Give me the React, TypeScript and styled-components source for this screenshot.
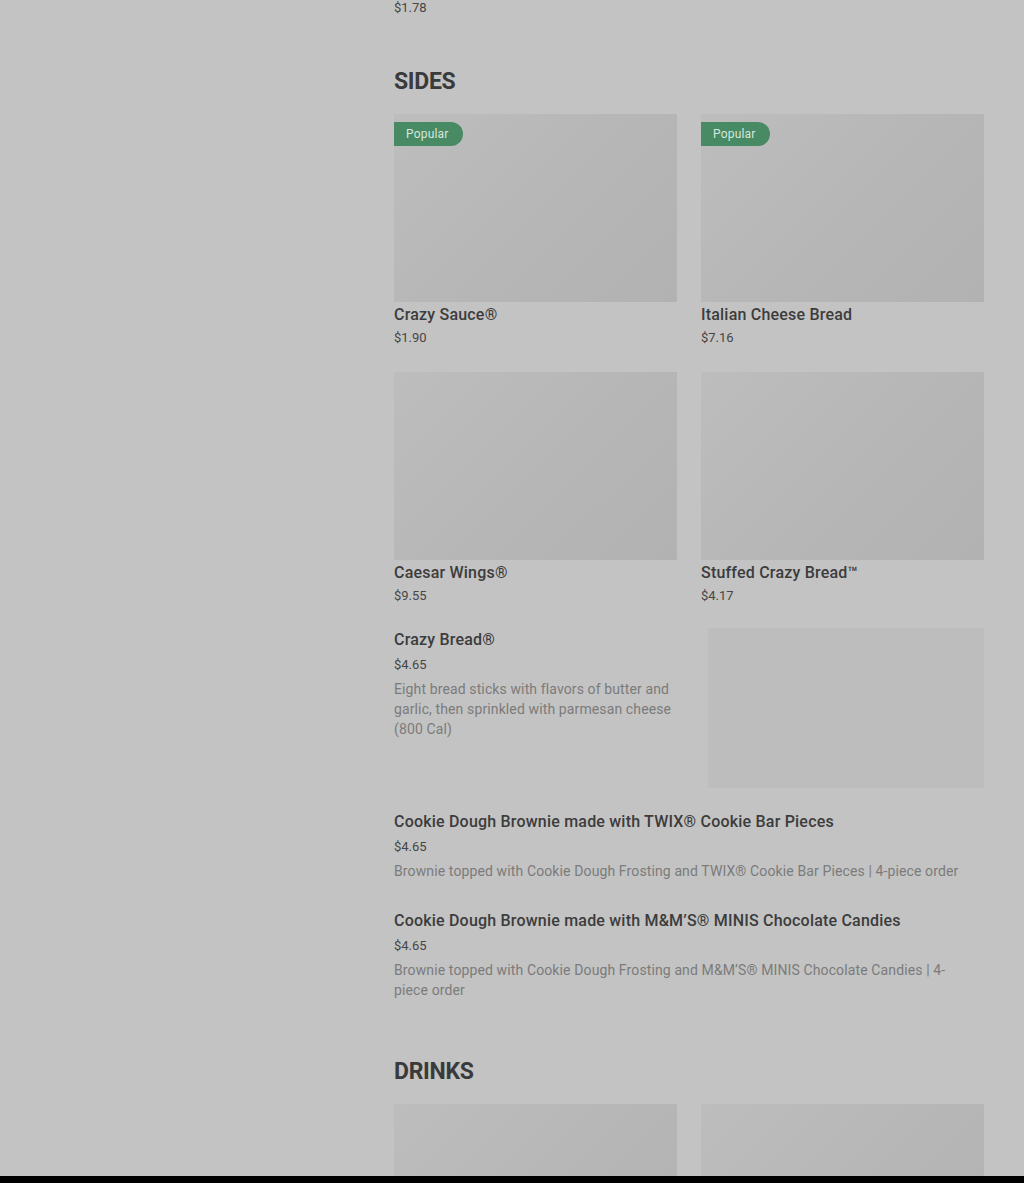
import styled, { createGlobalStyle } from 'styled-components';

const GlobalStyle = createGlobalStyle`
  html, body {
    margin: 0;
    padding: 0;
    background: #000000;
  }
  body {
    font-family: Roboto, "Liberation Sans", sans-serif;
    color: #3a3a3a;
  }
  * {
    box-sizing: border-box;
  }
`;

const Page = styled.div`
  height: 1176px;
  overflow: hidden;
  background: #c3c3c3;
  display: flex;
`;

const Sidebar = styled.aside`
  width: 394px;
  flex-shrink: 0;
`;

const Main = styled.main`
  width: 590px;
  display: flex;
  flex-direction: column;
`;

const TailPrice = styled.div`
  font-size: 13px;
  line-height: 16px;
  color: #464646;
`;

const Section = styled.section`
  margin-top: 49px;
`;

const SectionTitle = styled.h2`
  margin: 0 0 16px;
  padding-top: 1px;
  font-size: 23px;
  line-height: 32px;
  font-weight: 700;
  letter-spacing: -0.3px;
  color: #3a3a3a;
`;

const Grid = styled.ul`
  list-style: none;
  margin: 0;
  padding: 0;
  display: grid;
  grid-template-columns: 1fr 1fr;
  column-gap: 24px;
  row-gap: 24px;
`;

const Card = styled.li`
  display: flex;
  flex-direction: column;
`;

const Thumb = styled.div`
  position: relative;
  height: 188px;
  background: linear-gradient(135deg, #bdbdbd 0%, #b6b6b6 55%, #b2b2b2 100%);
`;

const Badge = styled.span`
  position: absolute;
  top: 8px;
  left: 0;
  height: 24px;
  padding: 0 14px 0 12px;
  display: flex;
  align-items: center;
  border-radius: 0 12px 12px 0;
  background: #478a64;
  color: #d6e6dc;
  font-size: 12px;
  letter-spacing: 0.2px;
`;

const ItemName = styled.div`
  margin-top: 2px;
  font-size: 16px;
  line-height: 22px;
  font-weight: 500;
  letter-spacing: 0.2px;
  color: #3c3c3c;
`;

const Price = styled.div`
  margin-top: 2px;
  font-size: 13px;
  line-height: 20px;
  color: #464646;
`;

const List = styled.ul`
  list-style: none;
  margin: 22px 0 0;
  padding: 0;
  display: flex;
  flex-direction: column;
  gap: 22px;
`;

const Row = styled.li`
  display: flex;
  gap: 18px;
`;

const RowText = styled.div<{ $withImage?: boolean }>`
  flex: 1;
  min-width: 0;
  padding: 1px ${(p) => (p.$withImage ? 6 : 12)}px 6px 0;
  display: flex;
  flex-direction: column;
  gap: 4px;
`;

const RowName = styled.div`
  font-size: 16px;
  line-height: 22px;
  font-weight: 500;
  letter-spacing: 0.2px;
  color: #3c3c3c;
`;

const RowPrice = styled.div`
  font-size: 13px;
  line-height: 20px;
  color: #464646;
`;

const Desc = styled.div`
  font-size: 14px;
  line-height: 20px;
  letter-spacing: 0.12px;
  color: #7b7b7b;
`;

const RowImage = styled.div`
  width: 276px;
  height: 160px;
  flex-shrink: 0;
  background: #bdbdbd;
`;

interface IItem {
  name: string;
  price: string;
  popular?: boolean;
}

interface IRowItem {
  name: string;
  price: string;
  description: string;
  image?: boolean;
}

const sides: IItem[] = [
  { name: 'Crazy Sauce®', price: '$1.90', popular: true },
  { name: 'Italian Cheese Bread', price: '$7.16', popular: true },
  { name: 'Caesar Wings®', price: '$9.55' },
  { name: 'Stuffed Crazy Bread™', price: '$4.17' },
];

const sideRows: IRowItem[] = [
  {
    name: 'Crazy Bread®',
    price: '$4.65',
    description:
      'Eight bread sticks with flavors of butter and garlic, then sprinkled with parmesan cheese (800 Cal)',
    image: true,
  },
  {
    name: 'Cookie Dough Brownie made with TWIX® Cookie Bar Pieces',
    price: '$4.65',
    description: 'Brownie topped with Cookie Dough Frosting and TWIX® Cookie Bar Pieces | 4-piece order',
  },
  {
    name: 'Cookie Dough Brownie made with M&M’S® MINIS Chocolate Candies',
    price: '$4.65',
    description:
      'Brownie topped with Cookie Dough Frosting and M&M’S® MINIS Chocolate Candies | 4-piece order',
  },
];

// drinks are below the fold: only their pictures show
const drinks = ['pepsi', 'diet-pepsi'];

function App() {
  return (
    <>
      <GlobalStyle />
      <Page>
        <Sidebar />
        <Main>
          <TailPrice>$1.78</TailPrice>
          <Section>
            <SectionTitle>SIDES</SectionTitle>
            <Grid>
              {sides.map((item) => (
                <Card key={item.name}>
                  <Thumb>{item.popular && <Badge>Popular</Badge>}</Thumb>
                  <ItemName>{item.name}</ItemName>
                  <Price>{item.price}</Price>
                </Card>
              ))}
            </Grid>
            <List>
              {sideRows.map((item) => (
                <Row key={item.name}>
                  <RowText $withImage={item.image}>
                    <RowName>{item.name}</RowName>
                    <RowPrice>{item.price}</RowPrice>
                    <Desc>{item.description}</Desc>
                  </RowText>
                  {item.image && <RowImage />}
                </Row>
              ))}
            </List>
          </Section>
          <Section>
            <SectionTitle>DRINKS</SectionTitle>
            <Grid>
              {drinks.map((id) => (
                <Card key={id}>
                  <Thumb />
                </Card>
              ))}
            </Grid>
          </Section>
        </Main>
      </Page>
    </>
  );
}

export default App;
